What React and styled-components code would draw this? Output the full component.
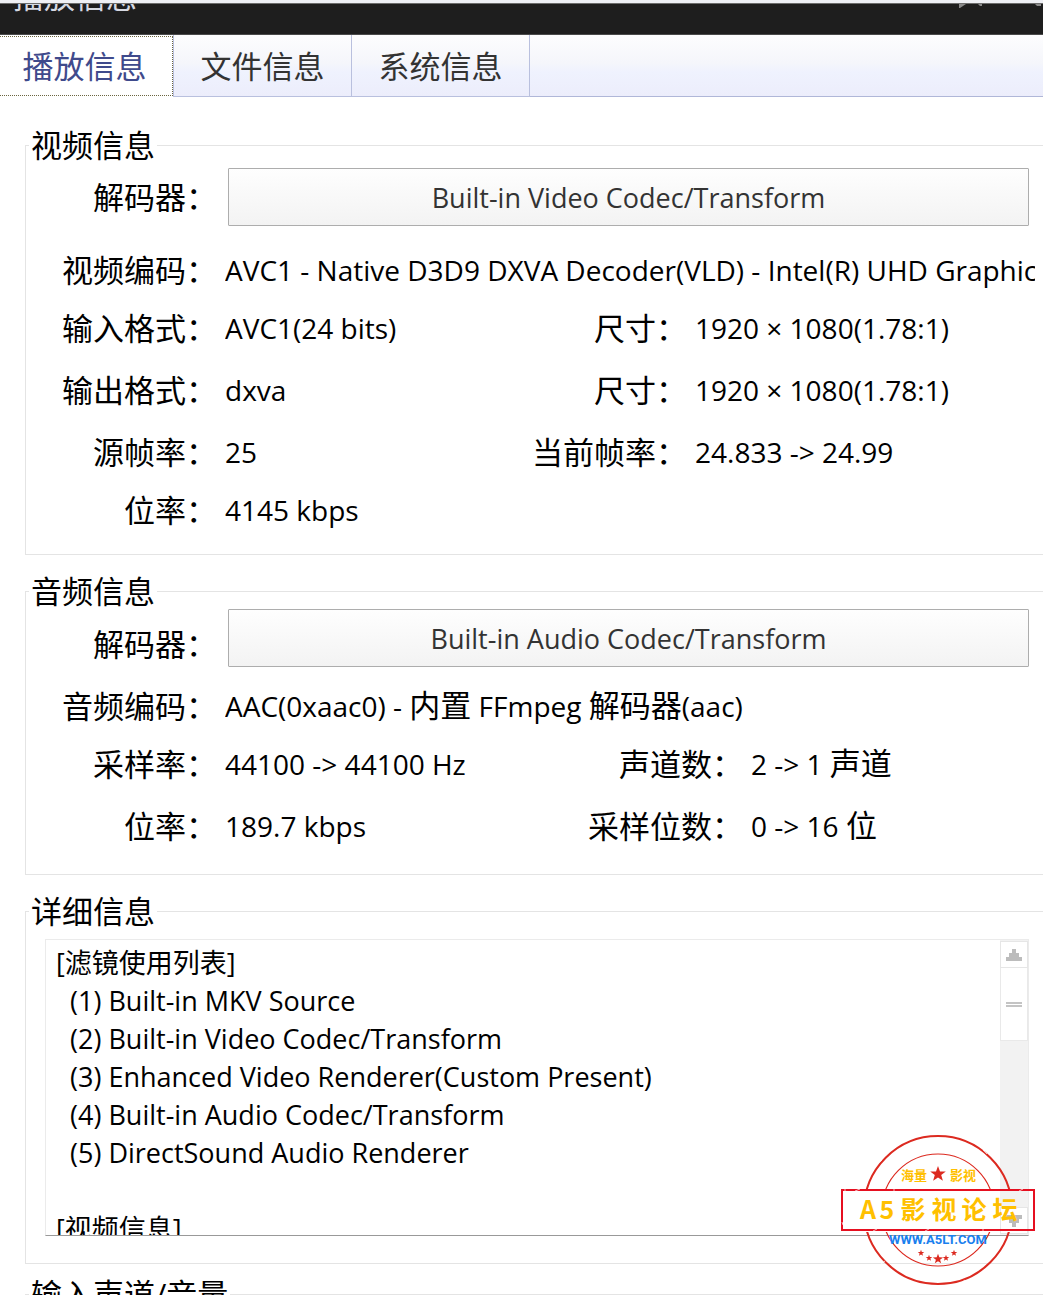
import React from "react";
import styled, { createGlobalStyle } from "styled-components";

const latin = '"Open Sans", "Noto Sans CJK SC", sans-serif';

const GlobalStyle = createGlobalStyle`
  * { box-sizing: border-box; }
  body {
    margin: 0;
    background: #fff;
    color: #000;
    font-family: ${latin};
    font-size: 28px;
  }
`;

const Window = styled.div`
  display: flex;
  flex-direction: column;
  height: 100vh;
  overflow: hidden;
  border-top: 3px solid #eff0f5;
`;

const TitleBar = styled.header`
  display: flex;
  justify-content: space-between;
  align-items: flex-start;
  flex: none;
  height: 32px;
  padding-left: 13px;
  overflow: hidden;
  background: #1e1e1e;
  border-top: 1px solid #6c6c6c;
  border-bottom: 1px solid #4a4a4a;
`;

const Title = styled.h1`
  margin: -24px 0 0;
  color: #d6d9e2;
  font-size: 31px;
  font-weight: 400;
  line-height: 32px;
`;

const TabBar = styled.nav`
  display: flex;
  flex: none;
  height: 62px;
  background: linear-gradient(#fdfdfe, #f5f6fb 45%, #eff2fe 60%, #ecedfb);
`;

const Tab = styled.button`
  flex: none;
  width: 178px;
  padding: 0;
  border: solid #b9c0de;
  border-width: ${(p) => (p.$active ? "0 1px 0 0" : "0 1px 1px 0")};
  background: ${(p) => (p.$active ? "#fff" : "transparent")};
  color: ${(p) => (p.$active ? "#3f4a8c" : "#333")};
  font-family: ${latin};
  font-size: 31px;
  line-height: 40px;
  ${(p) => p.$active && "outline: 1px dotted #6b6540; outline-offset: -2px; margin-left: -4px;"}
`;

const TabFill = styled.div`
  flex: 1;
  border-bottom: 1px solid #b0b7d8;
`;

const Content = styled.main`
  display: flex;
  flex-direction: column;
  flex: none;
  padding: 30px 0 0 25px;
`;

const Group = styled.fieldset`
  position: relative;
  min-width: 0;
  margin: 0 0 ${(p) => p.$after ?? 18}px;
  padding: ${(p) => p.$top}px 0 ${(p) => p.$bottom}px;
  border: 1px solid #e4e4e4;
  border-right: 0;
`;

const Legend = styled.legend`
  margin-left: 3px;
  padding: 0 2px;
  font-size: 31px;
  line-height: 36px;
`;

const Row = styled.div`
  display: grid;
  grid-template-columns: 191px minmax(0, 1fr) 180px ${(p) => p.$last ?? 348}px;
  column-gap: 8px;
  align-items: ${(p) => p.$align ?? "center"};
  height: 58px;
  margin-bottom: ${(p) => p.$gap ?? 0}px;
`;

const Label = styled.span`
  font-size: 31px;
  line-height: 46px;
  text-align: right;
  white-space: nowrap;
`;

const Value = styled.span`
  grid-column: ${(p) => (p.$wide ? "2 / -1" : "auto")};
  margin-right: 8px;
  line-height: 46px;
  overflow: hidden;
  white-space: nowrap;
`;

const Han = styled.span`
  font-size: 31px;
  line-height: 40px;
`;

const CodecButton = styled.button`
  grid-column: 2 / -1;
  height: 58px;
  margin: 0 14px 0 3px;
  border: 1px solid #adadad;
  border-radius: 1px;
  background: linear-gradient(#fefefe, #f3f3f3);
  color: #333;
  font-family: ${latin};
  font-size: 27px;
`;

const LogBox = styled.div`
  display: flex;
  height: 297px;
  margin: 0 14px 0 19px;
  border: 1px solid #ebebeb;
  border-bottom-color: #999;
`;

const LogText = styled.textarea`
  flex: 1;
  min-width: 0;
  padding: 4px 10px 0;
  border: 0;
  outline: 0;
  resize: none;
  overflow: hidden auto;
  scrollbar-width: none;
  background: transparent;
  color: #000;
  font-family: ${latin};
  font-size: 27px;
  line-height: 38px;
`;

const ScrollBar = styled.div`
  display: flex;
  flex-direction: column;
  width: 28px;
  padding: 1px 0;
  background: #f2f2f2;
`;

const ScrollButton = styled.button`
  display: grid;
  place-items: center;
  height: 27px;
  margin-top: ${(p) => (p.$end ? "auto" : 0)};
  padding: 0;
  border: 1px solid #e6e6e6;
  background: #fff;
`;

const Thumb = styled.div`
  display: grid;
  place-items: center;
  height: 73px;
  border: 1px solid #e9e9e9;
  border-top: 0;
  background: #fff;
`;

const Grip = styled.span`
  width: 16px;
  height: 5px;
  border: solid #c4c4c4;
  border-width: 2px 0;
`;

const Stamp = styled.svg`
  position: absolute;
  right: 7px;
  bottom: -23px;
  pointer-events: none;
`;

const StampText = styled.text`
  font-family: "Noto Sans CJK SC", sans-serif;
  font-size: ${(p) => p.$size}px;
  font-weight: 700;
  fill: #ffc000;
  text-anchor: middle;
`;

const StampUrl = styled.text`
  font-family: Roboto, "Liberation Sans", sans-serif;
  font-size: 13px;
  font-weight: 700;
  fill: #1a80ee;
  text-anchor: middle;
`;

const STAR = "M0-8L2-2.6L7.8-2.5L3.2 1.1L4.9 6.7L0 3.4L-4.9 6.7L-3.2 1.1L-7.8-2.5L-2-2.6Z";

const BANNER = [
  ["A", 27],
  ["5", 46],
  ["影", 72],
  ["视", 103],
  ["论", 133],
  ["坛", 164],
];

const SMALL_STARS = [
  [80, 119, 0.42],
  [88, 124, 0.42],
  [97, 125, 0.65],
  [105, 124, 0.42],
  [113, 119, 0.42],
];

function ForumStamp() {
  return (
    <Stamp width="195" height="152" viewBox="0 0 195 152">
      <clipPath id="ring">
        <path d="M0 0H195V55H0ZM0 98H195V152H0Z" />
      </clipPath>
      <g clipPath="url(#ring)" fill="none" stroke="#dc2a20">
        <circle cx="97" cy="76" r="74" strokeWidth="2" />
        <circle cx="97" cy="76" r="56" strokeWidth="1.2" />
      </g>
      <rect x="1" y="56" width="192" height="40" fill="none" stroke="#e60f20" strokeWidth="2" />
      <path
        d="M3 56h2M14 57l5-2M52 56h2M178 57l4-2M1 88l1 3M32 97l4-2M84 97l4-2M141 96h2M36 30l5-4M142 16l4 4M40 130l4-3M120 149l4-3"
        stroke="#fff"
        strokeWidth="1"
        opacity="0.7"
      />
      <path d={STAR} transform="translate(97 40)" fill="#dc2a20" />
      <StampText $size={13} x="73" y="46">海量</StampText>
      <StampText $size={13} x="122" y="46">影视</StampText>
      {BANNER.map(([char, x]) => (
        <StampText key={char} $size={25} x={x} y="85">{char}</StampText>
      ))}
      <StampUrl x="97" y="110">WWW.A5LT.COM</StampUrl>
      {SMALL_STARS.map(([x, y, s]) => (
        <path key={x} d={STAR} transform={`translate(${x} ${y}) scale(${s})`} fill="#dc2a20" />
      ))}
    </Stamp>
  );
}

const LOG = `[滤镜使用列表]
  (1) Built-in MKV Source
  (2) Built-in Video Codec/Transform
  (3) Enhanced Video Renderer(Custom Present)
  (4) Built-in Audio Codec/Transform
  (5) DirectSound Audio Renderer

[视频信息]`;

function Pair({ label, children, wide }) {
  return (
    <>
      <Label>{label}：</Label>
      <Value $wide={wide}>{children}</Value>
    </>
  );
}

export default function App() {
  return (
    <Window>
      <GlobalStyle />
      <TitleBar>
        <Title>播放信息</Title>
        <svg width="90" height="5" viewBox="0 0 90 5" fill="#8a8a8a">
          <path d="M6 0H13L10 2L7 4H6ZM25 0H29V2H27ZM82 0H88V2H84Z" />
        </svg>
      </TitleBar>
      <TabBar>
        <Tab $active>播放信息</Tab>
        <Tab>文件信息</Tab>
        <Tab>系统信息</Tab>
        <TabFill />
      </TabBar>
      <Content>
        <Group $top={5} $bottom={15}>
          <Legend>视频信息</Legend>
          <Row $gap={15}>
            <Label as="label" htmlFor="video-codec">解码器：</Label>
            <CodecButton id="video-codec">Built-in Video Codec/Transform</CodecButton>
          </Row>
          <Row>
            <Pair label="视频编码" wide>AVC1 - Native D3D9 DXVA Decoder(VLD) - Intel(R) UHD Graphic</Pair>
          </Row>
          <Row $gap={4}>
            <Pair label="输入格式">AVC1(24 bits)</Pair>
            <Pair label="尺寸">1920 × 1080(1.78:1)</Pair>
          </Row>
          <Row $gap={4}>
            <Pair label="输出格式">dxva</Pair>
            <Pair label="尺寸">1920 × 1080(1.78:1)</Pair>
          </Row>
          <Row>
            <Pair label="源帧率">25</Pair>
            <Pair label="当前帧率">24.833 -&gt; 24.99</Pair>
          </Row>
          <Row>
            <Pair label="位率">4145 kbps</Pair>
          </Row>
        </Group>
        <Group $top={0} $bottom={19}>
          <Legend>音频信息</Legend>
          <Row $gap={10} $align="end">
            <Label as="label" htmlFor="audio-codec">解码器：</Label>
            <CodecButton id="audio-codec">Built-in Audio Codec/Transform</CodecButton>
          </Row>
          <Row>
            <Pair label="音频编码" wide>
              AAC(0xaac0) - <Han>内置</Han> FFmpeg <Han>解码器</Han>(aac)
            </Pair>
          </Row>
          <Row $gap={4} $last={292}>
            <Pair label="采样率">44100 -&gt; 44100 Hz</Pair>
            <Pair label="声道数">2 -&gt; 1 <Han>声道</Han></Pair>
          </Row>
          <Row $last={292}>
            <Pair label="位率">189.7 kbps</Pair>
            <Pair label="采样位数">0 -&gt; 16 <Han>位</Han></Pair>
          </Row>
        </Group>
        <Group $top={10} $bottom={27} $after={12}>
          <Legend>详细信息</Legend>
          <LogBox>
            <LogText readOnly aria-label="详细信息" value={LOG} />
            <ScrollBar>
              <ScrollButton aria-label="向上">
                <svg width="16" height="12" viewBox="0 0 16 12" fill="#bcbcbc">
                  <path d="M6 0H10V4H13V8H16V12H0V8H3V4H6Z" />
                </svg>
              </ScrollButton>
              <Thumb>
                <Grip />
              </Thumb>
              <ScrollButton $end aria-label="向下">
                <svg width="16" height="12" viewBox="0 0 16 12" fill="#bcbcbc">
                  <path d="M0 0H16V4H13V8H10V12H6V8H3V4H0Z" />
                </svg>
              </ScrollButton>
            </ScrollBar>
          </LogBox>
          <ForumStamp />
        </Group>
        <Group $top={20} $bottom={20}>
          <Legend>输入声道/音量</Legend>
        </Group>
      </Content>
    </Window>
  );
}
